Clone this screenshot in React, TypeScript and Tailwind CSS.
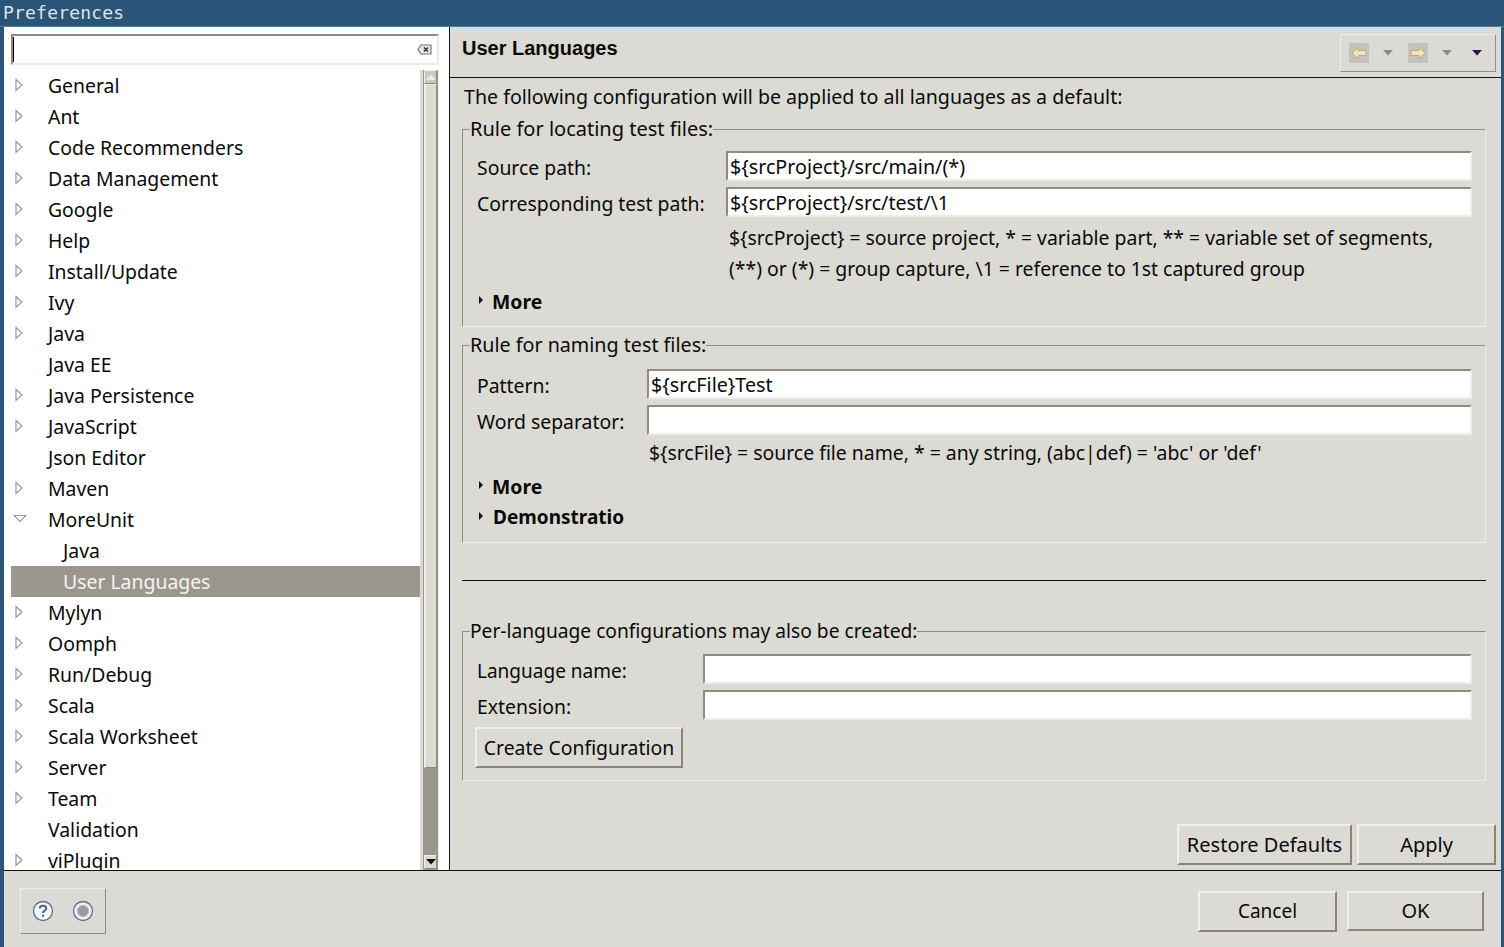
import type { ReactNode } from 'react';

const treeItems = [
  { label: 'General', arrow: true },
  { label: 'Ant', arrow: true },
  { label: 'Code Recommenders', arrow: true },
  { label: 'Data Management', arrow: true },
  { label: 'Google', arrow: true },
  { label: 'Help', arrow: true },
  { label: 'Install/Update', arrow: true },
  { label: 'Ivy', arrow: true },
  { label: 'Java', arrow: true },
  { label: 'Java EE', arrow: false },
  { label: 'Java Persistence', arrow: true },
  { label: 'JavaScript', arrow: true },
  { label: 'Json Editor', arrow: false },
  { label: 'Maven', arrow: true },
  { label: 'MoreUnit', open: true },
  { label: 'Java', child: true },
  { label: 'User Languages', child: true, selected: true },
  { label: 'Mylyn', arrow: true },
  { label: 'Oomph', arrow: true },
  { label: 'Run/Debug', arrow: true },
  { label: 'Scala', arrow: true },
  { label: 'Scala Worksheet', arrow: true },
  { label: 'Server', arrow: true },
  { label: 'Team', arrow: true },
  { label: 'Validation', arrow: false },
  { label: 'viPlugin', arrow: true },
];

function TreeRow({ item }: { item: (typeof treeItems)[number] }) {
  return (
    <div className={`flex h-[31px] shrink-0 items-center ${item.selected ? 'bg-[#9c978e] text-[#f4f3f0]' : ''}`}>
      <div className="flex w-[37px] shrink-0 justify-start pl-[3px]">
        {item.arrow && (
          <svg width="10" height="14" viewBox="0 0 10 14" className="-translate-y-[1px]">
            <path d="M2 1.5 L8 7 L2 12.5 Z" fill="#fff" stroke="#9b9890" strokeWidth="1.2" />
          </svg>
        )}
        {item.open && (
          <svg width="14" height="10" viewBox="0 0 14 10" className="-translate-y-[1px] -translate-x-[1px]">
            <path d="M1 1.5 H13 L7 7.5 Z" fill="#fff" stroke="#9b9890" strokeWidth="1.2" />
          </svg>
        )}
      </div>
      <span className={item.child ? 'pl-[15px]' : ''}>{item.label}</span>
    </div>
  );
}

function TextField({ value, className }: { value?: string; className: string }) {
  return (
    <div
      className={`h-[30px] whitespace-nowrap border-2 border-t-[#8f8b80] border-l-[#8f8b80] border-r-[#eeedea] border-b-[#eeedea] bg-white px-[2px] text-[19.7px] leading-[28px] text-[#0a0a0a] ${className}`}
    >
      {value}
    </div>
  );
}

function FieldRow({ label, width, className, children }: { label: string; width: string; className: string; children: ReactNode }) {
  return (
    <div className={`flex items-center ${className}`}>
      <label className={`pt-[4px] leading-[22px] ${width}`}>{label}</label>
      {children}
    </div>
  );
}

function Group({ title, className, legendClass, children }: { title: string; className: string; legendClass?: string; children: ReactNode }) {
  return (
    <fieldset className={`border border-t-[#8f8d86] border-l-[#8f8d86] border-r-[#efeeeb] border-b-[#efeeeb] pl-[14px] pr-[13px] ${className}`}>
      <legend className={`-ml-[7px] h-[22px] leading-[22px] ${legendClass ?? ''}`}>{title}</legend>
      {children}
    </fieldset>
  );
}

function Twisty({ label, className }: { label: string; className?: string }) {
  return (
    <div className="flex h-[31px] items-center font-bold">
      <svg width="6" height="10" viewBox="0 0 6 10" className="ml-[1px] -translate-y-[2px]">
        <path d="M1 1 L5 5 L1 9 Z" fill="#111" />
      </svg>
      <span className={`ml-[8px] ${className ?? ''}`}>{label}</span>
    </div>
  );
}

function PushButton({ label, className }: { label: string; className: string }) {
  return (
    <button className={`flex shrink-0 items-center justify-center border-2 border-t-[#f0efec] border-l-[#f0efec] border-r-[#8a8578] border-b-[#8a8578] bg-[#dcdad5] text-[#0a0a0a] ${className}`}>
      {label}
    </button>
  );
}

function NavArrow({ flip }: { flip?: boolean }) {
  return (
    <div className="flex h-[20px] w-[20px] items-center justify-center bg-[#c4c2bc]">
      <svg width="16" height="14" viewBox="0 0 16 14" className={flip ? 'rotate-180' : ''}>
        <path d="M1 7 L7 1.5 V4.5 H15 V9.5 H7 V12.5 Z" fill="#f0e4c0" stroke="#c8a86c" strokeWidth="1" />
      </svg>
    </div>
  );
}

function SmallDrop({ color, className }: { color: string; className?: string }) {
  return (
    <svg width="10" height="6" viewBox="0 0 10 6" className={className}>
      <path d="M0 0 H10 L5 5.5 Z" fill={color} />
    </svg>
  );
}

function ScrollBar() {
  return (
    <div className="flex w-[19px] shrink-0 border-r border-[#eeedea] bg-[#dcdad5] pl-[3px]">
      <div className="flex w-[15px] flex-col bg-[#9c978e] px-[1px]">
        <div className="flex h-[14px] shrink-0 items-center justify-center border border-t-[#efeeeb] border-l-[#efeeeb] border-r-[#8f8b80] border-b-[#8f8b80] bg-[#c9c7c1]">
          <SmallDrop color="#eeedea" className="rotate-180" />
        </div>
        <div className="h-[684px] shrink-0 border border-l-2 border-t-[#efeeeb] border-l-[#efeeeb] border-r-[#8f8b80] border-b-[#8f8b80] bg-[#dcdad5]" />
        <div className="mt-auto mb-[1px] flex h-[14px] shrink-0 items-center justify-center border border-t-[#efeeeb] border-l-[#efeeeb] border-r-[#8f8b80] border-b-[#8f8b80] bg-[#dcdad5]">
          <SmallDrop color="#111" />
        </div>
      </div>
    </div>
  );
}

export default function App() {
  return (
    <div className="flex h-[947px] w-[1504px] flex-col overflow-hidden bg-[#dcdad5] font-['Noto_Sans',sans-serif] text-[19.4px] text-[#0a0a0a]">
      <div className="h-[27px] shrink-0 border-b border-[#4a7fa5] bg-[#2a5578] pl-[3px] font-['DejaVu_Sans_Mono',monospace] text-[18px] leading-[26px] tracking-[0.2px] text-[#dde5ec]">
        Preferences
      </div>

      <div className="flex min-h-0 flex-1 border-l-[4px] border-r-[3px] border-[#2a5578]">
        <div className="flex w-[446px] shrink-0 flex-col">
          <div className="flex h-[844px] shrink-0 border-b border-r border-[#111] bg-white">
            <div className="flex w-[445px] flex-col pl-[7px] pt-[7px]">
              <div className="flex h-[31px] w-[428px] shrink-0 items-center justify-between border-2 border-t-[#8f8b80] border-l-[#8f8b80] border-r-[#ecebe8] border-b-[#ecebe8] pr-[5px]">
                <div className="h-[25px] w-[1px] bg-black" />
                <svg width="15" height="11" viewBox="0 0 15 11">
                  <path d="M4 1 H14 V10 H4 L1 5.5 Z" fill="#e8e8e8" stroke="#777" strokeWidth="1.2" />
                  <path d="M7 3.5 L11 7.5 M11 3.5 L7 7.5" stroke="#333" strokeWidth="1.6" />
                </svg>
              </div>
              <div className="mt-[5px] flex min-h-0 flex-1">
                <div className="flex w-[409px] flex-col overflow-hidden">
                  {treeItems.map((item, i) => (
                    <TreeRow key={i} item={item} />
                  ))}
                </div>
                <ScrollBar />
              </div>
            </div>
          </div>
          <div className="pl-[16px] pt-[17px]">
            <div className="flex h-[46px] w-[86px] items-center gap-[18px] border border-t-[#efeeeb] border-l-[#efeeeb] border-r-[#8f8d86] border-b-[#8f8d86] pl-[11px]">
              <svg width="22" height="22" viewBox="0 0 22 22">
                <circle cx="11" cy="11" r="9.5" fill="#f4f5f8" stroke="#5a6f94" strokeWidth="1.3" />
                <path d="M7.8 8.4 C7.8 4.8 14.2 4.8 14.2 8.4 C14.2 10.6 11 10.6 11 13" fill="none" stroke="#4e628a" strokeWidth="2" />
                <rect x="10" y="14.6" width="2" height="2.2" fill="#4e628a" />
              </svg>
              <svg width="22" height="22" viewBox="0 0 22 22">
                <circle cx="11" cy="11" r="9.5" fill="#eceef2" stroke="#5a6f94" strokeWidth="1.3" />
                <circle cx="11" cy="11" r="5.5" fill="#9a9a9a" stroke="#b4b4b4" />
              </svg>
            </div>
          </div>
        </div>

        <div className="flex min-w-0 flex-1 flex-col">
          <div className="flex h-[51px] shrink-0 justify-between border-b border-[#111] pl-[12px] pr-[5px] pt-[7px]">
            <h1 className="h-[28px] font-['Liberation_Sans',sans-serif] text-[20px] font-bold leading-[28px]">User Languages</h1>
            <div className="flex h-[38px] w-[156px] items-center border border-t-[#efeeeb] border-l-[#efeeeb] border-r-[#8f8d86] border-b-[#8f8d86] pl-[8px]">
              <NavArrow />
              <div className="ml-[14px]"><SmallDrop color="#8c8a84" /></div>
              <div className="ml-[15px]"><NavArrow flip /></div>
              <div className="ml-[14px]"><SmallDrop color="#8c8a84" /></div>
              <div className="ml-[20px]"><SmallDrop color="#2a1a4a" /></div>
            </div>
          </div>

          <div className="flex min-h-0 flex-1 flex-col pl-[12px] pr-[15px]">
            <div className="h-[30px] shrink-0 pl-[2px] pt-[4px] text-[19.6px] leading-[30px]">The following configuration will be applied to all languages as a default:</div>

            <Group title="Rule for locating test files:" legendClass="text-[20px]" className="mt-[10px] h-[209px] shrink-0">
              <FieldRow label="Source path:" width="w-[249px]" className="mt-[11px]">
                <TextField value="${srcProject}/src/main/(*)" className="w-[746px]" />
              </FieldRow>
              <FieldRow label="Corresponding test path:" width="w-[249px]" className="mt-[6px]">
                <TextField value="${srcProject}/src/test/\1" className="w-[746px]" />
              </FieldRow>
              <div className="ml-[252px] mt-[5px] leading-[31px]">
                <div>{'${srcProject} = source project, * = variable part, ** = variable set of segments,'}</div>
                <div>{'(**) or (*) = group capture, \\1 = reference to 1st captured group'}</div>
              </div>
              <div className="mt-[2px]">
                <Twisty label="More" />
              </div>
            </Group>

            <Group title="Rule for naming test files:" legendClass="text-[19.7px]" className="mt-[7px] h-[209px] shrink-0">
              <FieldRow label="Pattern:" width="w-[170px]" className="mt-[13px]">
                <TextField value="${srcFile}Test" className="w-[825px]" />
              </FieldRow>
              <FieldRow label="Word separator:" width="w-[170px]" className="mt-[6px]">
                <TextField className="w-[825px]" />
              </FieldRow>
              <div className="ml-[172px] mt-[2px] leading-[31px]">{"${srcFile} = source file name, * = any string, (abc|def) = 'abc' or 'def'"}</div>
              <div className="mt-[3px]">
                <Twisty label="More" />
              </div>
              <Twisty label="Demonstratio" className="ml-[9px] text-[19px]" />
            </Group>

            <div className="mt-[37px] h-[1px] shrink-0 bg-[#111]" />

            <Group title="Per-language configurations may also be created:" legendClass="text-[19.2px]" className="mt-[39px] h-[161px] shrink-0">
              <FieldRow label="Language name:" width="w-[226px] text-[19px]" className="mt-[12px]">
                <TextField className="w-[769px]" />
              </FieldRow>
              <FieldRow label="Extension:" width="w-[226px]" className="mt-[6px]">
                <TextField className="w-[769px]" />
              </FieldRow>
              <PushButton label="Create Configuration" className="-ml-[2px] mt-[7px] h-[41px] w-[208px]" />
            </Group>

            <div className="mt-auto flex justify-end gap-[5px] -mr-[10px] pb-[5px] text-[20px]">
              <PushButton label="Restore Defaults" className="h-[41px] w-[175px]" />
              <PushButton label="Apply" className="h-[41px] w-[139px]" />
            </div>
          </div>

          <div className="flex h-[77px] shrink-0 justify-end gap-[10px] border-t border-[#111] pr-[17px] pt-[20px] text-[20px]">
            <PushButton label="Cancel" className="h-[41px] w-[139px] text-[19px]" />
            <PushButton label="OK" className="h-[40px] w-[137px]" />
          </div>
        </div>
      </div>
    </div>
  );
}
